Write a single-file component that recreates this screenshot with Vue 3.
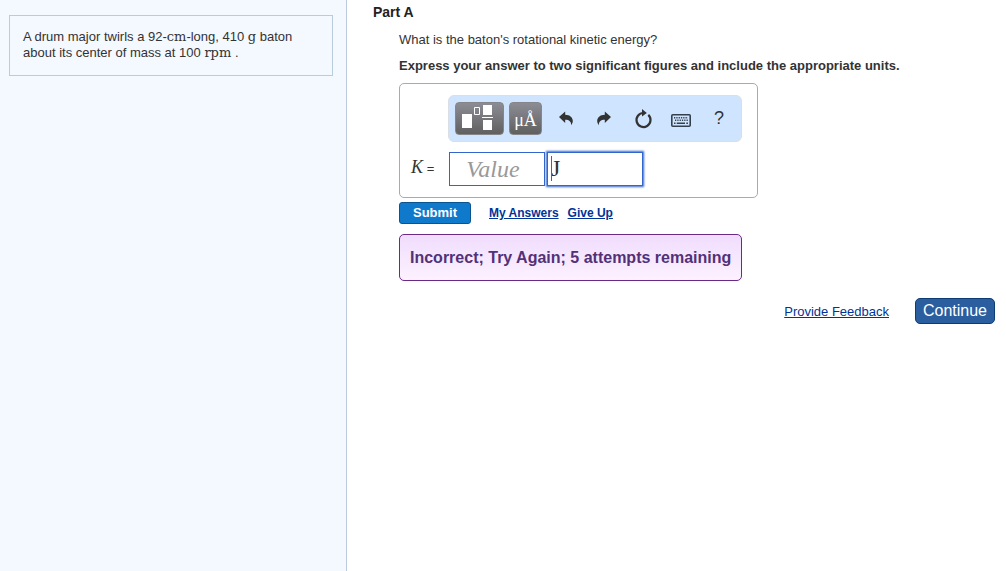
<script setup>
import { ref } from 'vue'

const value = ref('')
const units = ref('J')
</script>

<template>
  <div class="page">
    <aside class="sidebar">
      <p class="problem">
        A drum major twirls a 92-<span class="unit">cm</span>-long, 410 <span class="unit">g</span> baton about its center of mass at 100 <span class="unit">rpm</span> .
      </p>
    </aside>

    <main class="main">
      <h1 class="part">Part A</h1>
      <form class="question" @submit.prevent>
        <p class="prompt">What is the baton's rotational kinetic energy?</p>
        <p class="instruction">Express your answer to two significant figures and include the appropriate units.</p>

        <div class="answer-box">
          <div class="toolbar" role="toolbar" aria-label="Answer tools">
            <button type="button" class="tool templates" aria-label="Templates">
              <svg width="47" height="31" viewBox="0 0 47 31">
                <path fill="#fff" d="M6 11h10v14H6zM27 2h9v10h-9zM27 17h9v10h-9zM26 14h11v1H26z" />
                <path fill="none" stroke="#fff" d="M18.500 4.500h5v7h-5z" />
              </svg>
            </button>
            <button type="button" class="tool symbols" aria-label="Symbols">μÅ</button>
            <button type="button" class="icon" aria-label="Undo">
              <svg width="16" height="18" viewBox="0 0 16 18">
                <path fill="#333" d="M1 7 7.200 1.500v3.200c4.800 0 7.600 3 7.600 6.300 0 1.600-.8 3-1.700 4.200.2-3.600-1.700-5.500-5.900-5.500v3.200z" />
              </svg>
            </button>
            <button type="button" class="icon" aria-label="Redo">
              <svg width="16" height="18" viewBox="0 0 16 18">
                <path fill="#333" d="M15 7 8.800 1.500v3.200c-4.800 0-7.600 3-7.600 6.300 0 1.600.8 3 1.700 4.200-.2-3.600 1.700-5.500 5.900-5.500v3.200z" />
              </svg>
            </button>
            <button type="button" class="icon" aria-label="Reset">
              <svg width="18" height="22" viewBox="0 0 18 22">
                <path fill="none" stroke="#333" stroke-width="2.200" d="M14.300 6.900A7 7 0 1 1 9.500 5" />
                <path fill="#333" d="M8 1 12.800 4.900 8 8.500z" />
              </svg>
            </button>
            <button type="button" class="icon" aria-label="Keyboard">
              <svg class="keyboard" width="20" height="13" viewBox="0 0 20 13">
                <rect x=".8" y=".8" width="18.400" height="11.400" rx="1" fill="none" stroke="#36404c" stroke-width="1.600" />
                <path fill="none" stroke="#36404c" stroke-width="1.400" stroke-dasharray="1.300 1" d="M3 3.700h14M4 6.300h13" />
                <path fill="none" stroke="#36404c" stroke-width="1.400" d="M3 9.300h1.500M5.700 9.300h8.300M15.300 9.300H17" />
              </svg>
            </button>
            <button type="button" class="icon help" aria-label="Help">?</button>
          </div>

          <div class="fields">
            <label class="variable" for="value"><i>K</i> =</label>
            <input id="value" v-model="value" class="field value" placeholder="Value">
            <span class="units-wrap">
              <input v-model="units" class="field units" aria-label="Units">
              <span class="caret"></span>
            </span>
          </div>
        </div>

        <div class="actions">
          <button type="submit" class="submit">Submit</button>
          <a href="#">My Answers</a>
          <a href="#">Give Up</a>
        </div>

        <p class="result">Incorrect; Try Again; 5 attempts remaining</p>
      </form>

      <footer class="footer">
        <a href="#">Provide Feedback</a>
        <button type="button" class="continue">Continue</button>
      </footer>
    </main>
  </div>
</template>

<style>
body {
  background: #fff;
}
</style>

<style scoped>
.page {
  display: grid;
  grid-template-columns: 347px 1fr;
  min-height: 100vh;
  font: 13px/16px "Liberation Sans", Arial, sans-serif;
  color: #333;
}
.page *,
.page {
  box-sizing: border-box;
}
p,
h1 {
  margin: 0;
}
button {
  padding: 0;
  font-family: inherit;
  cursor: pointer;
}
a {
  color: #039;
}
.sidebar {
  padding: 15px 13px 15px 9px;
  background: #f4f8ff;
  border-right: 1px solid #b8ccdb;
}
.problem {
  padding: 13px 13px 14px;
  border: 1px solid #b8ccdb;
}
.unit {
  font-family: "DejaVu Serif", serif;
  line-height: 14px;
}
.main {
  padding: 4px 11px 16px 26px;
}
.part {
  font-size: 14px;
  line-height: 16px;
  color: #222;
}
.question {
  padding: 12px 0 0 26px;
}
.instruction {
  margin-top: 10px;
  font-weight: bold;
}
.answer-box {
  width: 359px;
  max-width: 100%;
  margin-top: 9px;
  padding: 11px 15px 11px 11px;
  border: 1px solid #aaa;
  border-radius: 5px;
}
.toolbar {
  display: flex;
  align-items: center;
  height: 47px;
  margin-left: 37px;
  padding: 0 3px 0 6px;
  background: #cfe5ff;
  border: 1px solid #dadfe6;
  border-radius: 6px;
}
.tool {
  height: 33px;
  color: #fff;
  background: linear-gradient(#8c8c95, #606060);
  border: 1px solid #85858a;
  border-radius: 4px;
}
.tool svg {
  display: block;
}
.templates {
  width: 49px;
  margin-right: 5px;
}
.symbols {
  width: 33px;
  padding-top: 3px;
  margin-right: 5px;
  font: 18px/28px "Liberation Serif", "Times New Roman", serif;
}
.icon {
  display: flex;
  flex: 1;
  align-items: center;
  justify-content: center;
  height: 32px;
  background: none;
  border: 0;
}
.keyboard {
  margin-top: 3px;
}
.help {
  font-size: 18px;
  color: #333;
}
.fields {
  display: flex;
  align-items: center;
  margin-top: 10px;
}
.variable {
  width: 38px;
  margin-bottom: 2px;
}
.variable i {
  font: italic 18px/16px "Liberation Serif", "Times New Roman", serif;
}
.field {
  display: block;
  width: 96px;
  height: 34px;
  font: 24px/30px "Liberation Serif", "Times New Roman", serif;
  color: #333;
  background: #fff;
  border: 1px solid #36c;
  border-radius: 0;
  outline: 0;
}
.value {
  padding: 0 8px 0 0;
  text-align: center;
}
.value::placeholder {
  font-style: italic;
  color: #999;
}
.units-wrap {
  position: relative;
  margin-left: 2px;
}
.units {
  padding: 0 3px 2px;
  caret-color: transparent;
  box-shadow: 0 0 2px 1px #36c;
}
.caret {
  position: absolute;
  top: 4px;
  left: 4px;
  width: 1px;
  height: 25px;
  background: #36c;
}
.actions {
  display: flex;
  align-items: center;
  margin-top: 4px;
  font-size: 12px;
  font-weight: bold;
}
.actions a {
  margin-right: 9px;
}
.submit {
  width: 72px;
  height: 22px;
  margin-right: 18px;
  font-size: 13px;
  font-weight: bold;
  line-height: 18px;
  color: #fff;
  background: #0f7acb;
  border: 1px solid #0a5590;
  border-radius: 3px;
}
.result {
  width: fit-content;
  margin-top: 10px;
  padding: 14px 10px;
  font-size: 16px;
  font-weight: bold;
  line-height: 17px;
  color: #523178;
  background: linear-gradient(#f0dcfd, #fdf2ff);
  border: 1px solid #6a2a86;
  border-radius: 5px;
}
.footer {
  display: flex;
  align-items: center;
  justify-content: flex-end;
  gap: 26px;
  margin-top: 17px;
}
.footer a {
  padding-top: 2px;
}
.continue {
  width: 80px;
  height: 26px;
  font-size: 16px;
  color: #fff;
  background: #2a5e9e;
  border: 1px solid #0e3d76;
  border-radius: 5px;
}
</style>
